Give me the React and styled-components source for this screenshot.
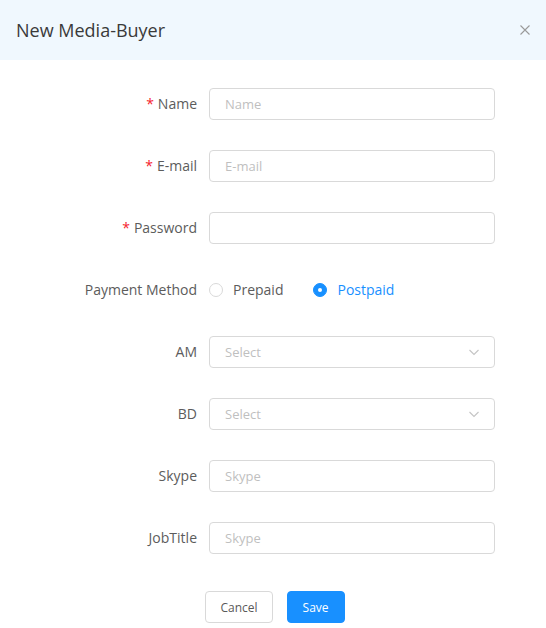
import React from 'react';
import styled, { createGlobalStyle } from 'styled-components';

const GlobalStyle = createGlobalStyle`
  body {
    margin: 0;
    background: #fff;
    font-family: 'Open Sans', 'Liberation Sans', sans-serif;
  }
`;

const Modal = styled.div`
  width: 546px;
  height: 628px;
  background: #fff;
`;

const Header = styled.div`
  height: 60px;
  background: #f0f8fe;
  display: flex;
  align-items: center;
  justify-content: space-between;
  padding: 0 14px 0 16px;
  box-sizing: border-box;
`;

const Title = styled.h2`
  margin: 0;
  font-size: 18px;
  font-weight: 400;
  color: #3a3a3a;
`;

const Close = styled.button`
  border: 0;
  background: none;
  padding: 0;
  width: 14px;
  height: 14px;
  display: flex;
  align-items: center;
  justify-content: center;
`;

const Form = styled.form`
  display: grid;
  grid-template-columns: 197px 286px;
  column-gap: 12px;
  row-gap: 30px;
  padding-top: 28px;
`;

const Label = styled.label`
  display: flex;
  align-items: center;
  justify-content: flex-end;
  height: 31px;
  padding-bottom: 1px;
  font-size: 14px;
  color: #5c5c5c;
`;

const Star = styled.span`
  color: #f5222d;
  margin-right: 4px;
`;

const Input = styled.input`
  height: 32px;
  box-sizing: border-box;
  border: 1px solid #d9d9d9;
  border-radius: 4px;
  padding: 0 15px;
  font-family: inherit;
  font-size: 13px;
  color: #595959;
  outline: none;

  &::placeholder {
    color: #bfbfbf;
  }
`;

const Select = styled.div`
  height: 32px;
  box-sizing: border-box;
  border: 1px solid #d9d9d9;
  border-radius: 4px;
  padding: 0 14px 0 15px;
  display: flex;
  align-items: center;
  justify-content: space-between;
  font-size: 13px;
  color: #bfbfbf;
`;

const RadioGroup = styled.div`
  display: flex;
  align-items: center;
  height: 31px;
  padding-bottom: 1px;
  gap: 30px;
`;

const RadioItem = styled.span`
  display: flex;
  align-items: center;
  gap: 10px;
  font-size: 14px;
  color: ${(p) => (p.checked ? '#1890ff' : '#5c5c5c')};
`;

const Dot = styled.span`
  width: 14px;
  height: 14px;
  box-sizing: border-box;
  border-radius: 50%;
  border: 1px solid ${(p) => (p.checked ? '#1890ff' : '#d9d9d9')};
  background: ${(p) => (p.checked ? '#1890ff' : '#fff')};
  display: flex;
  align-items: center;
  justify-content: center;

  &::after {
    content: '';
    width: 4px;
    height: 4px;
    border-radius: 50%;
    background: #fff;
    display: ${(p) => (p.checked ? 'block' : 'none')};
  }
`;

const Footer = styled.div`
  display: flex;
  justify-content: center;
  gap: 14px;
  margin-top: 37px;
  padding-left: 4px;
`;

const Button = styled.button`
  height: 32px;
  padding: 0 ${(p) => (p.primary ? '15px' : '14px')};
  border-radius: 4px;
  border: 1px solid ${(p) => (p.primary ? '#1890ff' : '#d9d9d9')};
  background: ${(p) => (p.primary ? '#1890ff' : '#fff')};
  color: ${(p) => (p.primary ? '#fff' : '#595959')};
  font-family: inherit;
  font-size: 12px;
`;

const Chevron = () => (
  <svg width="12" height="12" viewBox="0 0 12 12" fill="none">
    <path d="M1.5 4l4.5 4.5L10.5 4" stroke="#c4c4c4" strokeWidth="1.1" />
  </svg>
);

const fields = [
  { label: 'Name', required: true, placeholder: 'Name' },
  { label: 'E-mail', required: true, placeholder: 'E-mail' },
  { label: 'Password', required: true, placeholder: '', type: 'password' },
];

export default function App() {
  return (
    <>
      <GlobalStyle />
      <Modal>
        <Header>
          <Title>New Media-Buyer</Title>
          <Close aria-label="close">
            <svg width="10" height="10" viewBox="0 0 10 10">
              <path d="M0.5 0.5l9 9M9.5 0.5l-9 9" stroke="#9a9a9a" strokeWidth="1.1" />
            </svg>
          </Close>
        </Header>
        <Form>
          {fields.map((f) => (
            <React.Fragment key={f.label}>
              <Label>
                {f.required && <Star>*</Star>}
                {f.label}
              </Label>
              <Input type={f.type || 'text'} placeholder={f.placeholder} />
            </React.Fragment>
          ))}

          <Label>Payment Method</Label>
          <RadioGroup>
            <RadioItem>
              <Dot />
              Prepaid
            </RadioItem>
            <RadioItem checked>
              <Dot checked />
              Postpaid
            </RadioItem>
          </RadioGroup>

          <Label>AM</Label>
          <Select>
            Select
            <Chevron />
          </Select>

          <Label>BD</Label>
          <Select>
            Select
            <Chevron />
          </Select>

          <Label>Skype</Label>
          <Input placeholder="Skype" />

          <Label>JobTitle</Label>
          <Input placeholder="Skype" />
        </Form>
        <Footer>
          <Button type="button">Cancel</Button>
          <Button type="button" primary>
            Save
          </Button>
        </Footer>
      </Modal>
    </>
  );
}
